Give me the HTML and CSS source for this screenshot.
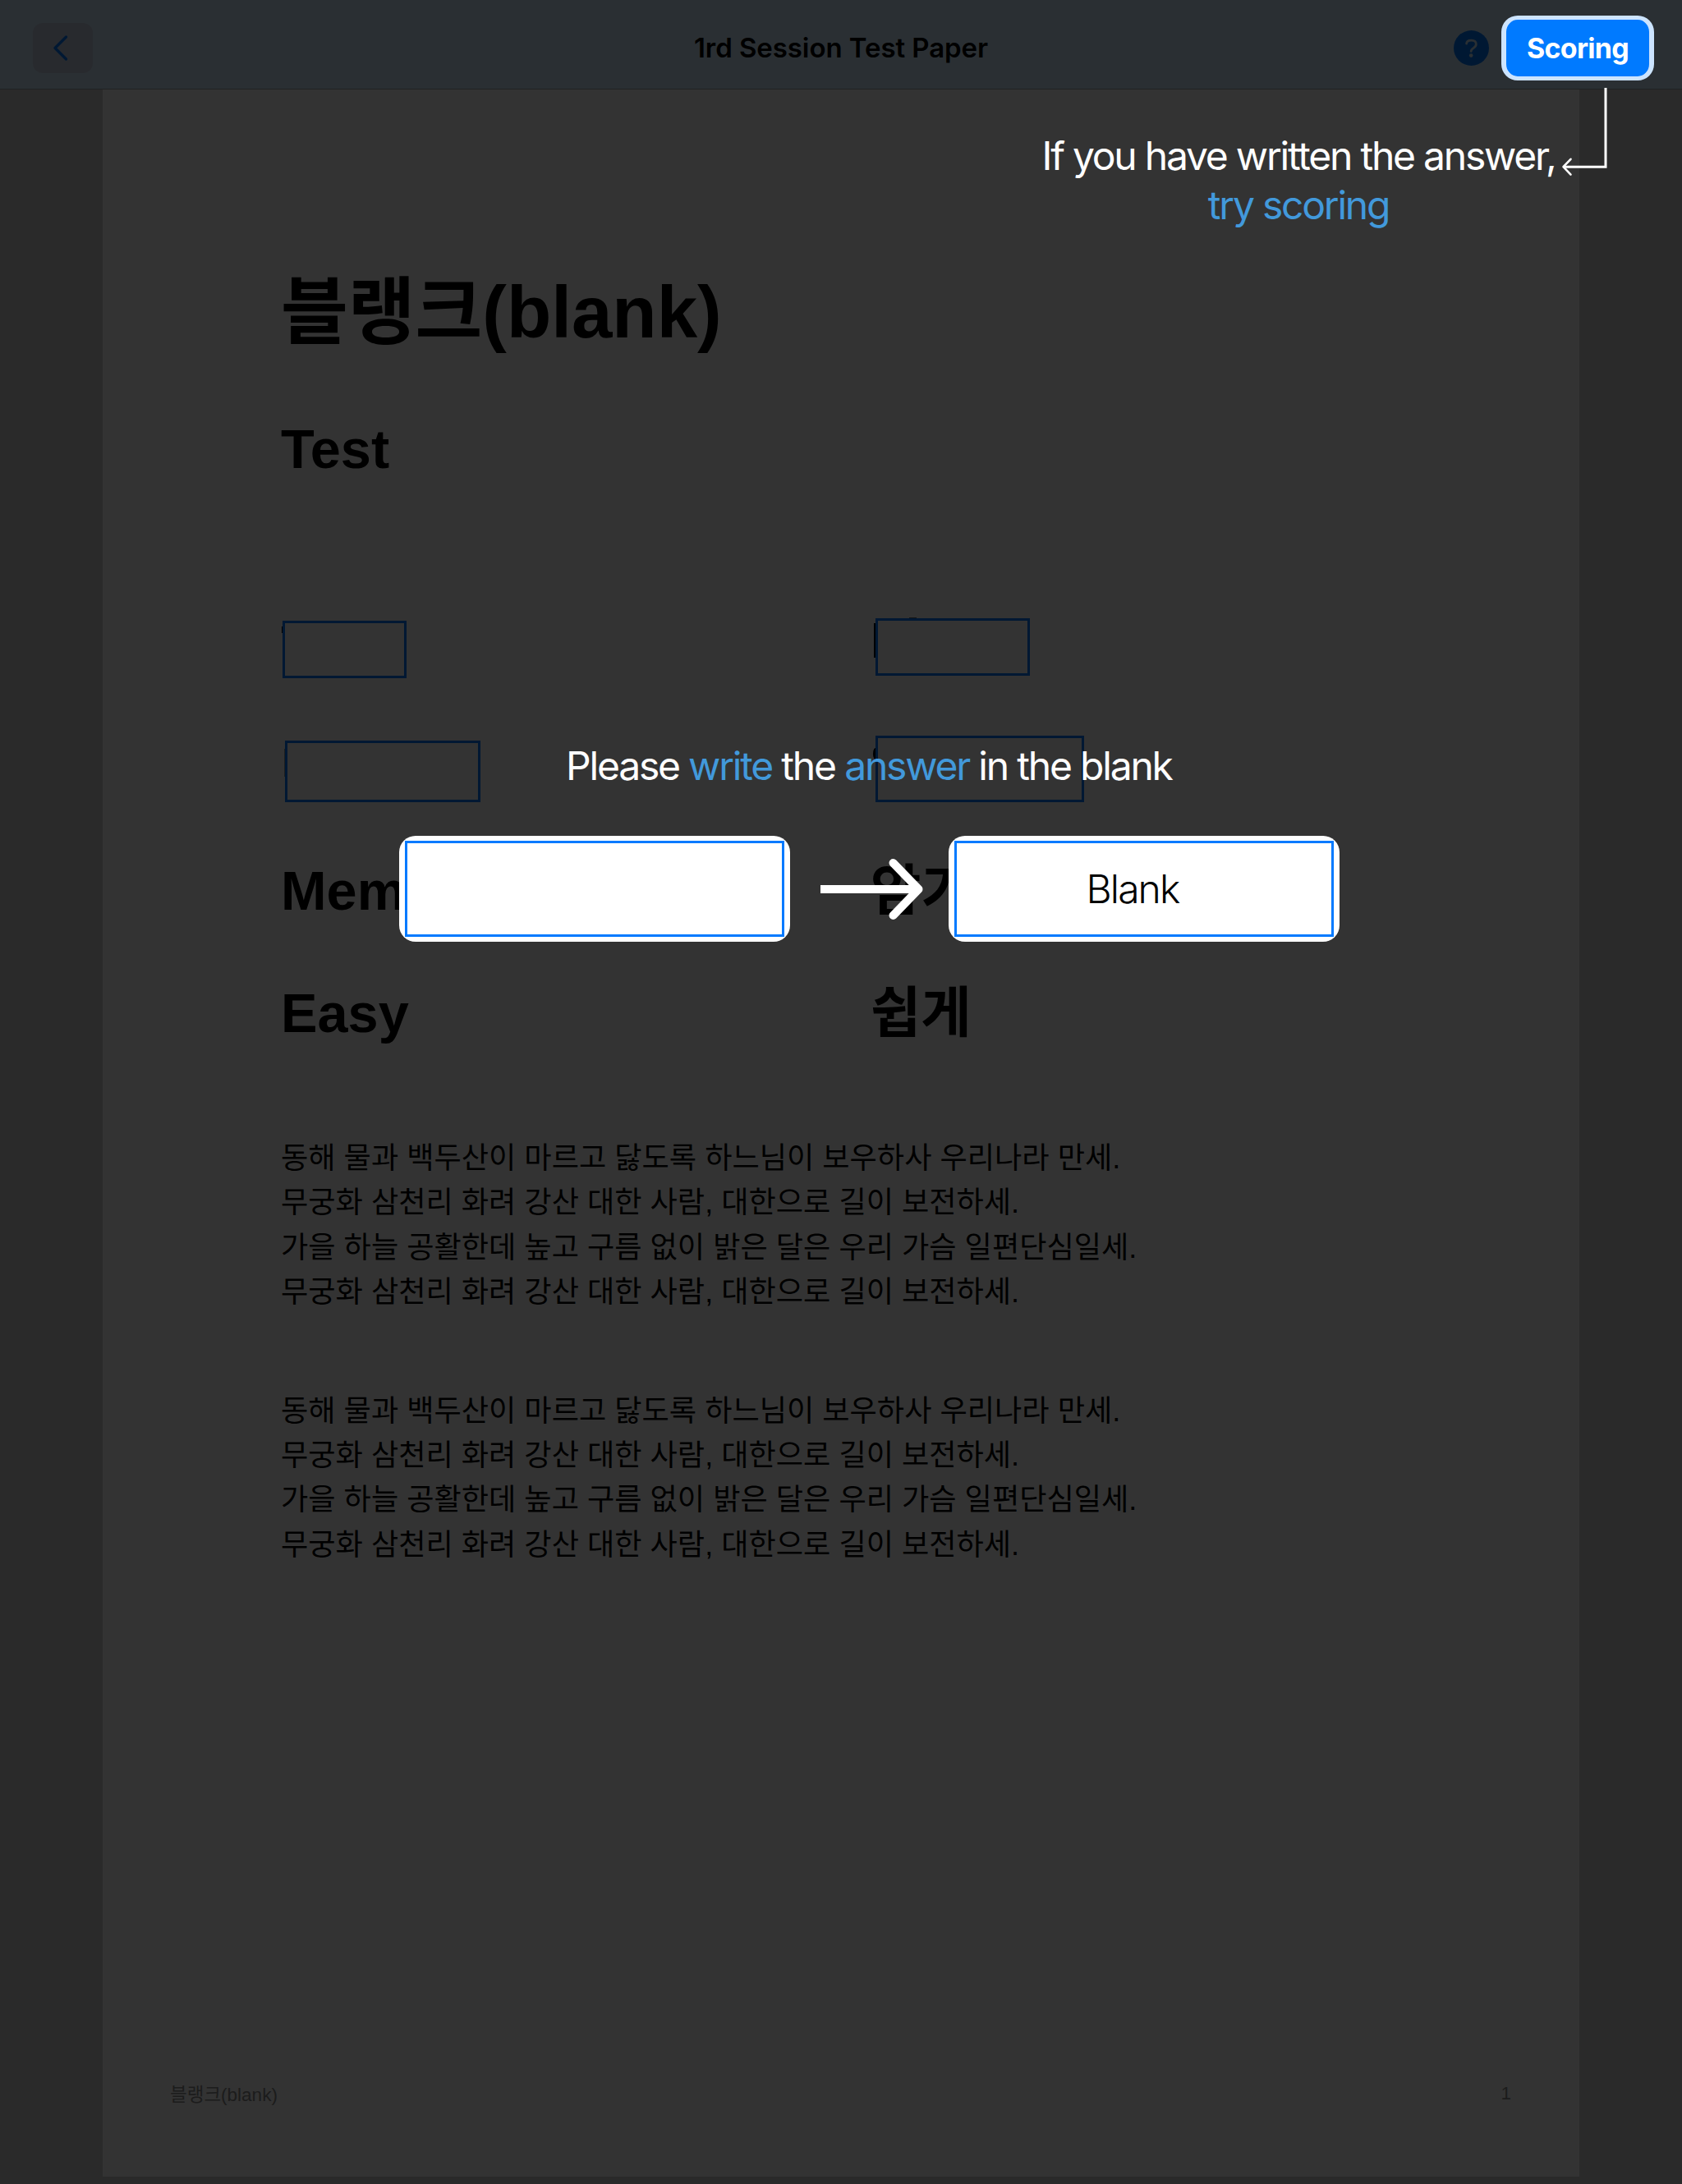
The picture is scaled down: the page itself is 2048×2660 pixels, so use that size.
FILE: index.html
```html
<!DOCTYPE html>
<html lang="ko">
<head>
<meta charset="utf-8">
<title>1rd Session Test Paper</title>
<link rel="stylesheet" href="styles.css">
</head>
<body>
<div class="screen">
  <header class="navbar">
    <button class="back" aria-label="Back">
      <svg width="20" height="33" viewBox="0 0 20 33"><path d="M16.5 3 3 16.5 16.5 30"/></svg>
    </button>
    <h1 class="nav-title">1rd Session Test Paper</h1>
    <span class="help">
      <svg width="43" height="43" viewBox="0 0 43 43"><circle class="help-disc" cx="21.5" cy="21.5" r="21.5"/><path class="help-mark" d="M15.600 16.200C15.800 13.600 18.300 12.200 21.400 12.200 25 12.200 27.300 14 27.300 16.800 27.300 18.900 26.200 20.200 24.300 21.400 22.300 22.700 21.200 23.600 21.200 25.400V25.600"/><circle class="help-dot" cx="21.200" cy="30.600" r="2.300"/></svg>
    </span>
  </header>
  <main class="paper">
    <h2 class="doc-title">블랭크(blank)</h2>
    <h3 class="doc-sub">Test</h3>
    <div class="words">
      <div class="cell"><span class="blank blank-a"><i class="ink ink-a"></i></span></div>
      <div class="cell"><span class="blank blank-b"><i class="ink ink-b"></i><i class="ink ink-b2"></i></span></div>
      <div class="cell"><span class="blank blank-c"><i class="ink ink-c"></i></span></div>
      <div class="cell"><span class="blank blank-d"><i class="ink ink-d"></i></span></div>
      <div class="cell">Memory</div>
      <div class="cell cell-ko">암기</div>
      <div class="cell">Easy</div>
      <div class="cell cell-ko">쉽게</div>
    </div>
    <p class="verse">동해 물과 백두산이 마르고 닳도록 하느님이 보우하사 우리나라 만세.<br>무궁화 삼천리 화려 강산 대한 사람, 대한으로 길이 보전하세.<br>가을 하늘 공활한데 높고 구름 없이 밝은 달은 우리 가슴 일편단심일세.<br>무궁화 삼천리 화려 강산 대한 사람, 대한으로 길이 보전하세.</p>
    <p class="verse">동해 물과 백두산이 마르고 닳도록 하느님이 보우하사 우리나라 만세.<br>무궁화 삼천리 화려 강산 대한 사람, 대한으로 길이 보전하세.<br>가을 하늘 공활한데 높고 구름 없이 밝은 달은 우리 가슴 일편단심일세.<br>무궁화 삼천리 화려 강산 대한 사람, 대한으로 길이 보전하세.</p>
    <footer class="doc-foot"><span class="foot-name">블랭크(blank)</span><span>1</span></footer>
  </main>

  <div class="guide">
    <button class="scoring">Scoring</button>
    <svg class="hook" width="60" height="112" viewBox="0 0 60 112"><path d="M55 2V98.200H5"/><path class="hook-tip" d="M12.500 88.800 3.500 98.200 12.500 107.600"/></svg>
    <p class="tip">If you have written the answer,<br><em>try scoring</em></p>
    <p class="ask">Please <em>write</em> the <em>answer</em> in the blank</p>
    <div class="demo">
      <div class="card"><div class="field"></div></div>
      <svg class="arrow" width="126" height="76" viewBox="0 0 126 76"><path class="shaft" d="M0 38H118"/><path class="head" d="M88.500 6 119.500 38 88.500 70"/></svg>
      <div class="card"><div class="field">Blank</div></div>
    </div>
  </div>
</div>
</body>
</html>
```

FILE: styles.css
```css
* { box-sizing: border-box; margin: 0; padding: 0; }
body { background: #d2d2d2; }
button { border: 0; font: inherit; }
em { font-style: normal; color: #4299db; }

.screen {
  position: relative;
  width: 2048px;
  height: 2660px;
  overflow: hidden;
  background: #d2d2d2;
  font-family: Inter, "Noto Sans CJK KR", sans-serif;
}

/* navigation bar */
.navbar {
  display: grid;
  grid-template-columns: 1fr auto 1fr;
  align-items: center;
  height: 109px;
  padding: 8px 235px 0 40px;
  background: #d2ebff;
  border-bottom: 1px solid #a0a8b0;
}
.back {
  display: flex;
  align-items: center;
  justify-content: center;
  width: 73px;
  height: 61px;
  border-radius: 12px;
  background: #c8d2e6;
}
.back svg { margin-right: 5px; fill: none; stroke: #007aff; stroke-width: 3.4; stroke-linecap: round; stroke-linejoin: round; }
.nav-title { font-size: 33px; font-weight: 600; line-height: 40px; letter-spacing: -0.07px; margin-left: 195px; color: #000; white-space: nowrap; }
.help { justify-self: end; height: 43px; }
.help-disc { fill: #007aff; }
.help-mark { fill: none; stroke: #d2ebff; stroke-width: 2.8; stroke-linecap: round; }
.help-dot { fill: #d2ebff; }

/* document page */
.paper {
  display: flex;
  flex-direction: column;
  width: 1798px;
  height: 2542px;
  margin: 0 auto;
  padding: 222px 83px 84px 217px;
  background: #fff;
  color: #000;
  font-family: "Liberation Sans", "Noto Sans CJK KR", sans-serif;
}
.doc-title { font-size: 88.900px; line-height: 100px; }
.doc-sub { margin-top: 76px; font-size: 66.700px; line-height: 80px; }
.words {
  display: grid;
  grid-template-columns: 717px 1fr;
  grid-auto-rows: 149px;
  margin-top: 125px;
  font-size: 66.700px;
  font-weight: 700;
}
.cell { display: flex; align-items: center; }
.cell-ko { padding: 0 0 11px 1px; }
.blank { position: relative; border: 3px solid #007aff; background: #fff; }
.blank-a { width: 151px; height: 70px; margin: 9px 0 0 2px; }
.blank-b { width: 188px; height: 70px; margin: 3px 0 0 7px; }
.blank-c { width: 238px; height: 75px; margin: 8px 0 0 5px; }
.blank-d { width: 254px; height: 81px; margin: 2px 0 0 7px; }

/* edges of the answers showing past the blanks */
.ink { position: absolute; background: #000; }
.ink-a { left: -4px; top: 4px; width: 1px; height: 8px; }
.ink-b { left: -5px; top: 3px; width: 2px; height: 42px; }
.ink-b2 { left: 38px; top: -4px; width: 9px; height: 1px; opacity: .6; }
.ink-c { left: -4px; top: 7px; width: 1px; height: 34px; opacity: .4; }
.ink-d { left: -6px; top: 12px; width: 3px; height: 14px; border-radius: 3px 0 0 3px / 7px 0 0 7px; }

.verse { margin-top: 76px; font-size: 36.180px; line-height: 54.300px; white-space: nowrap; }
.verse + .verse { margin-top: 90.600px; }
.doc-foot {
  display: flex;
  justify-content: space-between;
  margin: auto 0 0 -135px;
  font-size: 22.500px;
  line-height: 30px;
  color: #8c8c8c;
}
.foot-name { padding-top: 2px; }

/* coach-mark layer */
.guide { position: absolute; inset: 0; background: rgba(0, 0, 0, .8); color: #fff; }
.scoring {
  position: absolute;
  left: 1828px;
  top: 19px;
  width: 186px;
  height: 79px;
  border: solid #cce4ff;
  border-width: 5px 6px;
  border-radius: 20px;
  background: #007aff;
  color: #fff;
  font-size: 34px;
  font-weight: 700;
  letter-spacing: -0.700px;
}
.hook { position: absolute; left: 1900px; top: 105px; fill: none; stroke: #fff; stroke-width: 3; }
.hook-tip { stroke-width: 2.6; stroke-linecap: round; stroke-linejoin: round; }
.tip {
  position: absolute;
  left: 1261px;
  top: 160px;
  width: 640px;
  font-size: 48px;
  line-height: 60px;
  letter-spacing: -2.22px;
  text-align: center;
  white-space: nowrap;
}
.ask {
  position: absolute;
  left: 689px;
  top: 903px;
  font-size: 48px;
  line-height: 60px;
  letter-spacing: -2.200px;
  white-space: nowrap;
}
.demo { position: absolute; left: 486px; top: 1018px; display: flex; align-items: center; }
.card { width: 476px; height: 129px; padding: 6px 7px; border-radius: 20px; background: #fff; }
.field {
  display: flex;
  align-items: center;
  justify-content: center;
  height: 117px;
  padding-right: 28px;
  border: 3px solid #007aff;
  color: #000;
  font-size: 48px;
  font-weight: 300;
  letter-spacing: -1.9px;
}
.arrow { margin: 0 30px 0 37px; fill: none; stroke: #fff; stroke-width: 10; }
.head { stroke-linecap: round; stroke-linejoin: round; }
```
